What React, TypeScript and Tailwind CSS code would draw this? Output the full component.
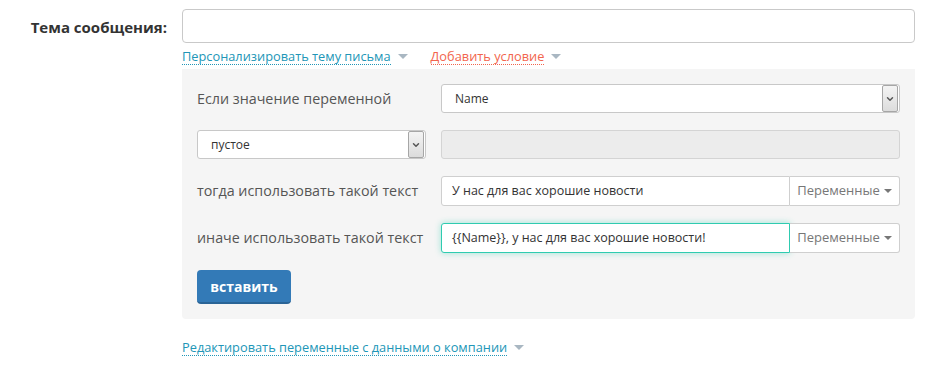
import { ChevronDown } from 'lucide-react';

const caret = (color: string) => (
  <span
    className="inline-block ml-[7px] align-middle w-0 h-0 border-l-[5px] border-r-[5px] border-t-[5px] border-l-transparent border-r-transparent"
    style={{ borderTopColor: color }}
  />
);

function FakeSelect({ value, width }: { value: string; width: string }) {
  return (
    <div className={`${width} h-[29px] flex items-center bg-white border border-[#c8c8c8] rounded-[3px] pl-[13px] pr-[1px]`}>
      <span className="flex-1 text-[12px] text-[#333]">{value}</span>
      <span className="w-[16px] h-[27px] flex items-center justify-center border border-[#a6a6a6] rounded-[2px] bg-gradient-to-b from-[#f4f4f4] to-[#dcdcdc]">
        <ChevronDown size={10} strokeWidth={3.5} className="text-[#555]" />
      </span>
    </div>
  );
}

function VarInput({ value, focused }: { value: string; focused?: boolean }) {
  return (
    <div className="flex w-[459px] h-[30px]">
      <div
        className={`flex-1 flex items-center pl-[10px] text-[12.5px] text-[#333] bg-white rounded-l-[3px] border ${
          focused ? 'border-[#2fcbb0] shadow-[0_0_6px_rgba(47,203,176,0.45)]' : 'border-[#cfcfcf]'
        }`}
      >
        {value}
      </div>
      <div className="w-[110px] flex items-center justify-center bg-white border border-l-0 border-[#cfcfcf] rounded-r-[3px] text-[13px] text-[#777]">
        Переменные
        <span className="inline-block ml-[4px] w-0 h-0 border-l-[4px] border-r-[4px] border-t-[4px] border-l-transparent border-r-transparent border-t-[#777]" />
      </div>
    </div>
  );
}

export default function App() {
  return (
    <div className="w-[925px] h-[384px] bg-white" style={{ fontFamily: '"Open Sans", "Liberation Sans", sans-serif' }}>
      <div className="flex pt-[9px]">
        <div className="w-[182px] pr-[15px] pt-[7px] text-right text-[15px] font-bold text-[#333]">Тема сообщения:</div>
        <div className="w-[733px]">
          <div className="h-[34px] bg-white border border-[#c9c9c9] rounded-[4px]" />
          <div className="flex h-[26px] items-center text-[12.8px]">
            <span className="text-[#2196b7] border-b border-dotted border-[#2196b7] leading-[16px]">Персонализировать тему письма</span>
            {caret('#a9b7c2')}
            <span className="ml-[23px] text-[#f2654d] border-b border-dotted border-[#f2654d] leading-[16px]">Добавить условие</span>
            {caret('#a9b7c2')}
          </div>
          <div className="bg-[#f5f5f5] rounded-b-[4px] pl-[15px] pr-[15px] pt-[15px] pb-[15px] flex flex-col gap-[17px]">
            <div className="flex items-center justify-between">
              <span className="text-[14.3px] text-[#555]">Если значение переменной</span>
              <FakeSelect value="Name" width="w-[459px]" />
            </div>
            <div className="flex items-center justify-between">
              <FakeSelect value="пустое" width="w-[229px]" />
              <div className="w-[459px] h-[29px] bg-[#ececec] border border-[#d4d4d4] rounded-[3px]" />
            </div>
            <div className="flex items-center justify-between">
              <span className="text-[14.3px] text-[#555]">тогда использовать такой текст</span>
              <VarInput value="У нас для вас хорошие новости" />
            </div>
            <div className="flex items-center justify-between">
              <span className="text-[14.3px] text-[#555]">иначе использовать такой текст</span>
              <VarInput value="{{Name}}, у нас для вас хорошие новости!" focused />
            </div>
            <div>
              <button className="w-[94px] h-[34px] bg-[#337ab7] border-b-2 border-[#2a6496] rounded-[4px] text-white font-bold text-[14px]">
                вставить
              </button>
            </div>
          </div>
          <div className="mt-[20px] flex items-center text-[12.8px]">
            <span className="text-[#2196b7] border-b border-dotted border-[#2196b7] leading-[16px]">
              Редактировать переменные с данными о компании
            </span>
            {caret('#a9b7c2')}
          </div>
        </div>
      </div>
    </div>
  );
}
